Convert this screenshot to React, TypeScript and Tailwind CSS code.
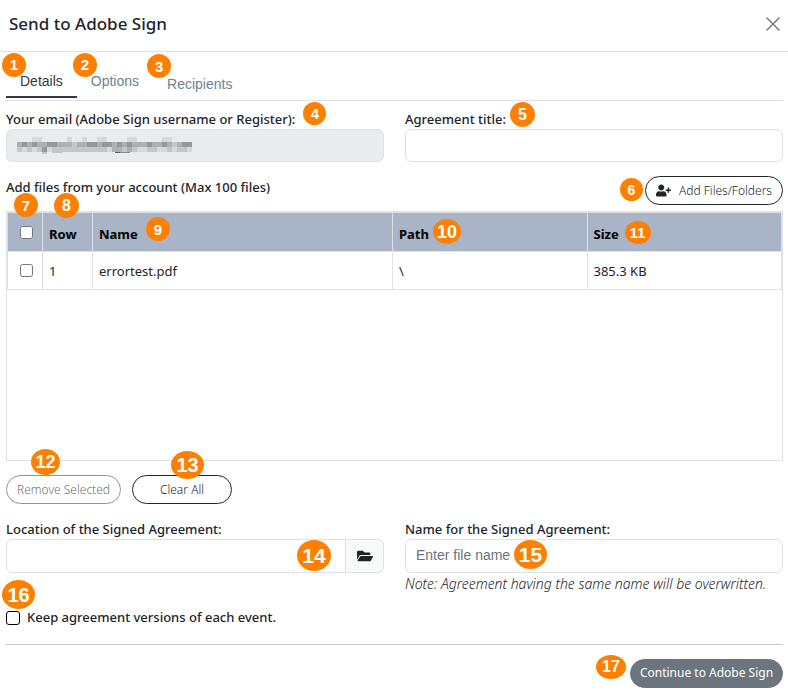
import { FaFolderOpen, FaUserPlus } from "react-icons/fa";

const sans = "font-['Noto_Sans',sans-serif]";
const arial = "font-['Liberation_Sans',sans-serif]";

function Badge({ n, className }: { n: number; className: string }) {
  return (
    <span
      className={`absolute z-10 flex items-center justify-center rounded-[50%] bg-[#ff8000] font-['Liberation_Sans',sans-serif] font-bold leading-none text-white ${className}`}
    >
      {n}
    </span>
  );
}

const pill = "flex h-[29px] items-center justify-center rounded-full border text-[12px]";
const field = "w-full rounded-md border border-[#dee2e6] px-[10px] text-[14px] outline-none placeholder:text-[#6c757d]";
const cell = "border border-[#dee2e6] px-[6px] text-left";
const headCell = `${cell} relative pt-[5px]`;
const labelRow = "flex h-5 items-center pt-[2px]";

// Pixelated address: each letter is a darkness step from a (none) to f (darkest)
const mosaic = [
  "aaabbaaaaabaabaabbaaaabbaaaaabbaaaa",
  "dededdeedddcddeedeedededddeddedcdee",
  "cbcbcebcccccccccccbddcdcbbccbbcbccb",
];
const steps: Record<string, string> = {
  b: "#d6d9dc",
  c: "#c3c6c9",
  d: "#adb0b3",
  e: "#95989b",
};

function HiddenAddress() {
  return (
    <svg className="absolute top-[8px] left-[11px]" width="175" height="18" shapeRendering="crispEdges" aria-hidden="true">
      {mosaic.map((row, y) =>
        row.split("").map((step, x) =>
          step === "a" ? null : <rect key={`${x}-${y}`} x={x * 5} y={y * 5} width="5" height="5" fill={steps[step]} />
        )
      )}
      <path d="M25 15h5v2h-5zM35 15h10v1H35z" fill="#c3c6c9" />
      <path d="M98 15h5v1h-5z" fill="#5f6264" />
      <path d="M103 15h10v1h-10z" fill="#85888b" />
    </svg>
  );
}

export default function App() {
  return (
    <div className={`min-h-screen bg-white text-[13px] text-[#212529] ${sans}`}>
      <header className="flex h-[52px] items-center justify-between border-b border-[#dee2e6] pr-2 pb-[3px] pl-[9px]">
        <h1 className="text-[17px] font-medium">Send to Adobe Sign</h1>
        <button aria-label="Close" className="text-[#7f7f7f]">
          <svg width="14" height="14" viewBox="0 0 14 14" fill="none" stroke="currentColor" strokeWidth="1.6" strokeLinecap="round">
            <path d="M1 1l12 12M13 1L1 13" />
          </svg>
        </button>
      </header>

      <main className="pr-[5px] pl-[6px]">
        <nav role="tablist" className={`flex h-[49px] items-start border-b border-[#dee2e6] text-[14px] text-[#6c8294] ${arial}`}>
          <button role="tab" aria-selected="true" className="relative h-[46px] border-b-2 border-[#343a46] px-[14px] pt-[14px] text-[#343a46]">
            Details
            <Badge n={1} className="top-[1px] -left-1 size-6 pb-[2px] text-[15px]" />
          </button>
          <button role="tab" aria-selected="false" className="relative h-[46px] px-[14px] pt-3">
            Options
            <Badge n={2} className="top-[1px] -left-1 size-6 pb-[2px] text-[15px]" />
          </button>
          <button role="tab" aria-selected="false" className="relative h-[46px] px-[14px] pt-[18px]">
            Recipients
            <Badge n={3} className="top-[2px] -left-[6px] size-6 text-[15px]" />
          </button>
        </nav>

        <form>
          <div className="grid grid-cols-2 gap-x-[21px] pt-[8px]">
            <div>
              <div className={labelRow}>
                <label htmlFor="email" className="relative font-medium">
                  Your email (Adobe Sign username or Register):
                  <Badge n={4} className="-top-2 left-full ml-2 size-[23px] text-[15px]" />
                </label>
              </div>
              <div className="relative">
                <input id="email" type="email" readOnly className={`${field} h-[33px] bg-[#e9ecef]`} />
                <HiddenAddress />
              </div>
            </div>
            <div>
              <div className={labelRow}>
                <label htmlFor="title" className="relative font-medium">
                  Agreement title:
                  <Badge n={5} className="-top-2 left-full ml-1 size-[25px] text-[16px]" />
                </label>
              </div>
              <input id="title" type="text" className={`${field} h-[33px]`} />
            </div>
          </div>

          <div className="flex items-start justify-between pt-[14px] pb-[6px]">
            <span className="pt-[2px] font-medium">Add files from your account (Max 100 files)</span>
            <button type="button" className={`${pill} relative w-[138px] gap-2 border-[#212529] font-light`}>
              <FaUserPlus size={15} />
              Add Files/Folders
              <Badge n={6} className="top-[1px] -left-[26px] size-[23px] text-[14px]" />
            </button>
          </div>

          <div className="h-[250px] border border-[#dee2e6]">
            <table className="w-full table-fixed border-collapse">
              <colgroup>
                <col className="w-[35px]" />
                <col className="w-[50px]" />
                <col className="w-[300px]" />
                <col />
                <col />
              </colgroup>
              <thead>
                <tr className="h-[39px] bg-[#a9b4c7] text-black">
                  <th className={`${cell} relative`}>
                    <input type="checkbox" aria-label="Select all files" className="ml-[6px] block size-[13px]" />
                    <Badge n={7} className="-top-5 left-[6px] size-6 text-[15px]" />
                  </th>
                  <th className={headCell}>
                    Row
                    <Badge n={8} className="-top-5 left-[11px] size-[25px] text-[16px]" />
                  </th>
                  <th className={headCell}>
                    Name
                    <Badge n={9} className="top-1 left-[53px] size-6 text-[15px]" />
                  </th>
                  <th className={headCell}>
                    Path
                    <Badge n={10} className="top-[6px] left-10 h-[25px] w-7 text-[18px]" />
                  </th>
                  <th className={headCell}>
                    Size
                    <Badge n={11} className="top-2 left-[37px] h-[23px] w-[26px] text-[15px]" />
                  </th>
                </tr>
              </thead>
              <tbody>
                <tr className="h-[38px]">
                  <td className={cell}>
                    <input type="checkbox" aria-label="Select errortest.pdf" className="ml-[6px] block size-[13px]" />
                  </td>
                  <td className={`${cell} pt-[2px]`}>1</td>
                  <td className={`${cell} pt-[2px]`}>errortest.pdf</td>
                  <td className={`${cell} pt-[2px]`}>\</td>
                  <td className={`${cell} pt-[2px]`}>385.3 KB</td>
                </tr>
              </tbody>
            </table>
          </div>

          <div className="flex gap-[11px] pt-[14px]">
            <button type="button" className={`${pill} relative w-[115px] border-[#909294] font-light text-[#6f7276]`}>
              Remove Selected
              <Badge n={12} className="-top-[27px] left-6 h-[26px] w-[29px] text-[18px]" />
            </button>
            <button type="button" className={`${pill} relative w-[100px] border-[#212529] font-light`}>
              Clear All
              <Badge n={13} className="-top-[25px] left-[38px] h-7 w-[33px] text-[20px]" />
            </button>
          </div>

          <div className="grid grid-cols-2 gap-x-[21px] pt-[15px]">
            <div>
              <div className={labelRow}>
                <label htmlFor="location" className="font-medium">Location of the Signed Agreement:</label>
              </div>
              <div className="relative flex">
                <input id="location" type="text" className={`${field} h-[34px] min-w-0 flex-1 rounded-r-none`} />
                <button type="button" aria-label="Browse folders" className="flex w-[38px] items-center justify-center rounded-r-md border border-l-0 border-[#dee2e6] bg-[#f8f9fa]">
                  <FaFolderOpen size={16} />
                </button>
                <Badge n={14} className="top-[1px] right-[53px] h-[31px] w-[34px] text-[21px]" />
              </div>
            </div>
            <div>
              <div className={labelRow}>
                <label htmlFor="filename" className="font-medium">Name for the Signed Agreement:</label>
              </div>
              <div className="relative">
                <input id="filename" type="text" placeholder="Enter file name" className={`${field} h-[34px] pb-[2px] ${arial}`} />
                <Badge n={15} className="top-[1px] left-[109px] h-[29px] w-[33px] text-[21px]" />
              </div>
              <p className="pt-[1px] text-[14px] leading-5 font-light italic">Note: Agreement having the same name will be overwritten.</p>
            </div>
          </div>

          <div className="flex pt-[14px]">
            <label className="relative flex items-center gap-[7px] font-medium">
              <input type="checkbox" className="size-[14px] appearance-none rounded-[3px] border border-black bg-white" />
              Keep agreement versions of each event.
              <Badge n={16} className="-top-7 -left-1 h-[29px] w-[33px] text-[20px]" />
            </label>
          </div>

          <hr className="mt-4 border-[#c8c9ca]" />

          <div className="flex justify-end pt-[14px]">
            <button type="submit" className={`${pill} relative w-[153px] border-[#6c757d] bg-[#6c757d] text-white`}>
              Continue to Adobe Sign
              <Badge n={17} className="-top-[5px] -left-[35px] h-6 w-[30px] text-[16px]" />
            </button>
          </div>
        </form>
      </main>
    </div>
  );
}
